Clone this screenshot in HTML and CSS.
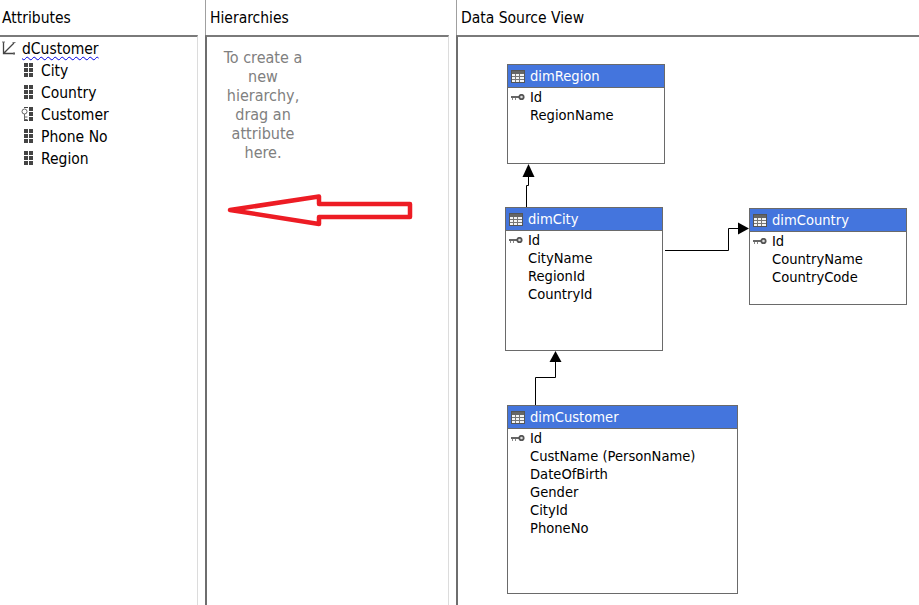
FILE: index.html
```html
<!DOCTYPE html>
<html lang="en">
<head>
<meta charset="utf-8">
<title>Dimension Designer</title>
<link rel="stylesheet" href="styles.css">
</head>
<body>
<svg class="defs" width="0" height="0" aria-hidden="true">
  <defs>
    <symbol id="attr" viewBox="0 0 9 14"><path fill="#444" d="M0 0h4v4H0zM5 0h4v4H5zM0 5h4v4H0zM5 5h4v4H5zM0 10h4v4H0zM5 10h4v4H5z"/></symbol>
    <symbol id="table" viewBox="0 0 14 13"><rect x=".5" y=".5" width="13" height="12" fill="#f4f4f4" stroke="#555"/><path fill="#666" d="M1 1h12v3H1z"/><path stroke="#777" fill="none" d="M1 6.500h12M1 9.500h12M4.500 4v8M8.500 4v8"/></symbol>
    <symbol id="key" viewBox="0 0 14 7"><path stroke="#666" stroke-width="2" fill="none" d="M0 3h9"/><path stroke="#888" d="M1.500 4v2M4.500 4v2" fill="none"/><circle cx="10.500" cy="3" r="2.200" fill="#ddd" stroke="#555" stroke-width="1.800"/></symbol>
  </defs>
</svg>
<main class="panes">
  <section class="pane pane-attrs">
    <h2 class="pane-title">Attributes</h2>
    <div class="pane-body">
      <div class="root-row">
        <svg class="dim-icon" width="16" height="16" viewBox="0 0 16 16"><path d="M3.500 2v11.500H15M3.500 13.500L14 3" fill="none" stroke="#444" stroke-width="1.300"/><path d="M2 2h3M14 12v3M12.500 2.500h3" stroke="#777" fill="none"/></svg>
        <span class="root-name">dCustomer</span>
      </div>
      <ul class="attr-list">
        <li class="attr"><svg class="attr-icon"><use href="#attr"/></svg>City</li>
        <li class="attr"><svg class="attr-icon"><use href="#attr"/></svg>Country</li>
        <li class="attr attr-key"><svg class="attr-icon"><use href="#attr"/></svg><svg class="attr-key-icon" width="7" height="12" viewBox="0 0 7 12"><rect width="7" height="12" fill="#fff"/><circle cx="3.500" cy="3.500" r="2.500" fill="#fff" stroke="#666"/><path d="M3.500 6v6M3.500 9h3M3.500 11.500h3" stroke="#666" fill="none"/></svg>Customer</li>
        <li class="attr"><svg class="attr-icon"><use href="#attr"/></svg>Phone No</li>
        <li class="attr"><svg class="attr-icon"><use href="#attr"/></svg>Region</li>
      </ul>
    </div>
  </section>

  <section class="pane pane-hier">
    <h2 class="pane-title">Hierarchies</h2>
    <div class="pane-body">
      <p class="hint">To create a new hierarchy, drag an attribute here.</p>
      <svg class="red-arrow" width="200" height="40" viewBox="0 0 200 40"><polygon points="23,17 112,3.500 112,11 203,11 203,24 112,24 112,31" fill="none" stroke="#ed1c24" stroke-width="4.500" stroke-linejoin="round"/></svg>
    </div>
  </section>

  <section class="pane pane-dsv">
    <h2 class="pane-title">Data Source View</h2>
    <div class="pane-body canvas">
      <svg class="links" width="461" height="568" viewBox="458 37 461 568">
        <g fill="none" stroke="#000" stroke-width="1">
          <path d="M526.500 207V185.500H528.500V176"/>
          <path d="M665 250.500H728.500V228.500H739"/>
          <path d="M535.500 405V377.500H555.500V361"/>
        </g>
        <g fill="#000">
          <polygon points="528.500,164 522.500,177 534.500,177"/>
          <polygon points="749,228.500 738,222.500 738,234.500"/>
          <polygon points="555.500,351 549.500,362 561.500,362"/>
        </g>
      </svg>

      <article class="node node-region">
        <header class="node-head"><svg class="table-icon"><use href="#table"/></svg>dimRegion</header>
        <ul class="cols">
          <li class="col"><svg class="key-icon"><use href="#key"/></svg>Id</li>
          <li class="col">RegionName</li>
        </ul>
      </article>

      <article class="node node-city">
        <header class="node-head"><svg class="table-icon"><use href="#table"/></svg>dimCity</header>
        <ul class="cols">
          <li class="col"><svg class="key-icon"><use href="#key"/></svg>Id</li>
          <li class="col">CityName</li>
          <li class="col">RegionId</li>
          <li class="col">CountryId</li>
        </ul>
      </article>

      <article class="node node-country">
        <header class="node-head"><svg class="table-icon"><use href="#table"/></svg>dimCountry</header>
        <ul class="cols">
          <li class="col"><svg class="key-icon"><use href="#key"/></svg>Id</li>
          <li class="col">CountryName</li>
          <li class="col">CountryCode</li>
        </ul>
      </article>

      <article class="node node-customer">
        <header class="node-head"><svg class="table-icon"><use href="#table"/></svg>dimCustomer</header>
        <ul class="cols">
          <li class="col"><svg class="key-icon"><use href="#key"/></svg>Id</li>
          <li class="col">CustName (PersonName)</li>
          <li class="col">DateOfBirth</li>
          <li class="col">Gender</li>
          <li class="col">CityId</li>
          <li class="col">PhoneNo</li>
        </ul>
      </article>
    </div>
  </section>
</main>
</body>
</html>
```
FILE: styles.css
```css
* { box-sizing: border-box; }
html, body { margin: 0; height: 100%; }
body {
  background: #fff;
  color: #000;
  font-family: "DejaVu Sans", "Noto Sans", sans-serif;
  font-stretch: condensed;
  font-size: 14.6px;
  overflow: hidden;
}
.defs { position: absolute; }
.panes {
  display: grid;
  grid-template-columns: 205px 251px 463px;
  height: 605px;
}
.pane { display: flex; flex-direction: column; min-height: 0; }
.pane-title {
  margin: 0;
  height: 35px;
  font-size: 15.5px;
  font-weight: 400;
  line-height: 36px;
  padding-left: 2px;
}
.pane-hier .pane-title { border-left: 1px solid #a0a0a0; padding-left: 4px; }
.pane-dsv .pane-title { border-left: 1px solid #a0a0a0; padding-left: 4px; }
.pane-body {
  flex: 1;
  position: relative;
  border-top: 2px solid #7a7a7a;
}
.pane-attrs .pane-body { width: 198px; border-right: 1px solid #dcdcdc; font-size: 15.5px; }
.pane-hier .pane-body { width: 244px; border-left: 2px solid #6e6e6e; border-right: 1px solid #dcdcdc; }
.pane-dsv .pane-body { border-left: 2px solid #6e6e6e; }

.root-row { display: flex; align-items: center; height: 22px; padding-top: 2px; }
.dim-icon { flex: none; margin-top: -2px; }
.root-name {
  margin-left: 6px;
  text-decoration: underline wavy #0000e0 1px;
  text-underline-offset: 2px;
}
.attr-list, .cols { list-style: none; margin: 0; padding: 0; }
.attr {
  position: relative;
  display: flex;
  align-items: center;
  height: 22px;
  padding: 2px 0 0 41px;
}
.attr-icon { position: absolute; left: 24px; top: 4px; width: 9px; height: 14px; }
.attr-key-icon { position: absolute; left: 21px; top: 5px; }

.hint {
  margin: 11px 0 0 6px;
  width: 100px;
  color: #808080;
  font-size: 16px;
  line-height: 19px;
  text-align: center;
}
.red-arrow { position: absolute; left: 0; top: 156px; overflow: visible; }

.canvas { overflow: hidden; }
.links { position: absolute; left: 0; top: 0; }
.node {
  position: absolute;
  background: #fff;
  border: 1px solid #6a6a6a;
  width: 158px;
}
.node-region { left: 49px; top: 27px; height: 100px; }
.node-city { left: 47px; top: 170px; height: 144px; }
.node-country { left: 291px; top: 171px; height: 97px; }
.node-customer { left: 49px; top: 368px; width: 231px; height: 189px; }
.node-head {
  position: relative;
  height: 23px;
  line-height: 22px;
  padding-left: 22px;
  background: #4475dd;
  color: #fff;
  border-bottom: 1px solid #6a6a6a;
}
.table-icon { position: absolute; left: 3px; top: 5px; width: 14px; height: 13px; }
.cols { padding-left: 22px; }
.col { position: relative; height: 18px; line-height: 18px; }
.key-icon { position: absolute; left: -19px; top: 6px; width: 14px; height: 7px; }
```
